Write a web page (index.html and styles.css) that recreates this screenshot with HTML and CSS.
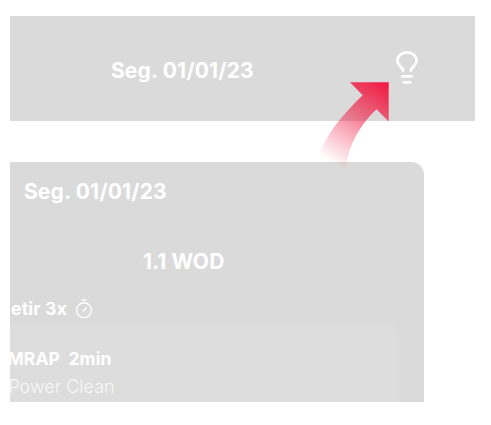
FILE: index.html
```html
<!DOCTYPE html>
<html lang="pt">
<head>
<meta charset="utf-8">
<title>WOD</title>
<link rel="stylesheet" href="styles.css">
</head>
<body>
<header class="bar">
  <span class="date">Seg. 01/01/23</span>
  <svg class="bulb" viewBox="0 0 24 36" fill="none" stroke="#fff" stroke-width="2.7" stroke-linecap="round">
    <path d="M8 20.7V19.6C6.5 16.6 2.4 15.4 2.4 10.9C2.4 5.9 6.7 2.4 12 2.4S21.6 5.9 21.6 10.9C21.6 15.4 17.5 16.6 16 19.6V20.7"/>
    <path d="M7.3 26.4H16.7M8.8 32.4H15.2"/>
  </svg>
</header>
<main class="card">
  <div class="date">Seg. 01/01/23</div>
  <h1 class="title">1.1 WOD</h1>
  <div class="repeat">
    <span class="count">etir 3x</span>
    <svg class="timer" viewBox="0 0 18 21" fill="none" stroke="#fff" stroke-width="1.4" stroke-linecap="round">
      <circle cx="9" cy="12.2" r="7.4"/>
      <path d="M7 2H11M8.3 13L11.5 9.8"/>
    </svg>
  </div>
  <section class="panel">
    <div class="amrap">MRAP&nbsp; 2min</div>
    <div class="exercise">Power Clean</div>
  </section>
</main>
<svg class="arrow" viewBox="310 75 90 100">
  <defs>
    <linearGradient id="fade" gradientUnits="userSpaceOnUse" x1="388" y1="82" x2="335" y2="165">
      <stop offset="0" stop-color="#f1163f"/>
      <stop offset="1" stop-color="#f1163f" stop-opacity="0"/>
    </linearGradient>
  </defs>
  <path fill="url(#fade)" d="M350 82.3H388.7V121.6L376.5 109.3C362 123 347 145 345.5 172L317 160C324 137 341 116 362.7 95.2Z"/>
</svg>
</body>
</html>
```
FILE: styles.css
```css
* { box-sizing: border-box; }
body {
  margin: 0;
  padding: 16.4px 0 0 10.4px;
  width: 491px;
  height: 425px;
  overflow: hidden;
  background: #fff;
  color: #fff;
  font-family: Inter, sans-serif;
}
.bar {
  display: flex;
  justify-content: space-between;
  align-items: center;
  width: 465px;
  height: 105.1px;
  padding: 0 56.6px 0 100.5px;
  background: #dadada;
}
.date {
  font-size: 21px;
  line-height: 26px;
  font-weight: 700;
  letter-spacing: 0.2px;
  white-space: nowrap;
  padding-top: 5px;
}
.bulb { width: 24px; height: 36px; margin-top: -2px; }
.card {
  width: 414px;
  height: 240px;
  margin-top: 40.5px;
  padding-top: 1px;
  border-top-right-radius: 13px;
  background: #dadada;
}
.card .date { padding: 16px 0 0 13.5px; }
.title {
  margin: 44px 0 0 132.5px;
  font-size: 21px;
  line-height: 26px;
  font-weight: 700;
  letter-spacing: 0.1px;
}
.repeat {
  display: flex;
  align-items: center;
  height: 22px;
  margin-top: 23px;
  font-size: 17.7px;
  line-height: 22px;
  font-weight: 700;
  letter-spacing: 0.2px;
}
.count { width: 64.5px; padding-left: 0.5px; }
.timer { width: 18px; height: 21px; }
.panel {
  width: 388.5px;
  height: 78px;
  margin-top: 4px;
  padding-top: 24px;
  border-top-right-radius: 13px;
  background: #ddd;
}
.amrap {
  margin-left: -3px;
  font-size: 17.5px;
  line-height: 22px;
  font-weight: 700;
  letter-spacing: 0.1px;
  white-space: nowrap;
}
.exercise {
  margin: 6px 0 0 -2px;
  font-size: 18px;
  line-height: 22px;
  font-weight: 300;
  color: #f8f8f8;
}
.arrow {
  position: absolute;
  left: 310px;
  top: 75px;
  width: 90px;
  height: 100px;
}
```
